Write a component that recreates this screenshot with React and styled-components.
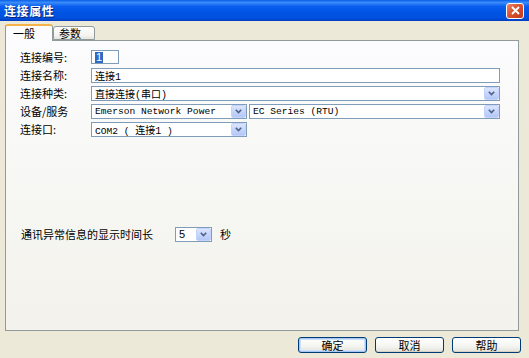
import React from 'react';
import styled, { createGlobalStyle } from 'styled-components';

const GlobalStyle = createGlobalStyle`
  html, body {
    margin: 0;
    padding: 0;
    background: #ece9d8;
    overflow: hidden;
  }
  body {
    font-family: "Noto Sans CJK SC", "Liberation Sans", sans-serif;
    font-size: 11px;
    color: #000;
  }
`;

const Window = styled.div`
  width: 529px;
  height: 358px;
  display: flex;
  flex-direction: column;
  background: #ece9d8;
`;

const TitleBar = styled.div`
  height: 21px;
  flex: none;
  display: flex;
  align-items: center;
  justify-content: space-between;
  padding: 0 5px 0 4px;
  background: linear-gradient(180deg, #0a5fe8 0%, #3b8cf8 12%, #0a5ef0 30%, #0054e3 60%, #0150de 85%, #003dc0 100%);
`;

const Title = styled.span`
  color: #fff;
  font-weight: bold;
  font-size: 12px;
  letter-spacing: 0.6px;
  text-shadow: 1px 1px 0 #0a1f76;
`;

const CloseButton = styled.div`
  width: 18px;
  height: 16px;
  border: 1px solid #fff;
  border-radius: 3px;
  background: linear-gradient(135deg, #e8846a 0%, #d9542f 45%, #c1391a 100%);
  display: flex;
  align-items: center;
  justify-content: center;
  box-sizing: border-box;
`;

const Body = styled.div`
  flex: 1;
  display: flex;
  flex-direction: column;
  padding: 3px 10px 0 5px;
`;

const TabRow = styled.div`
  display: flex;
  align-items: flex-end;
  height: 16px;
  position: relative;
  z-index: 1;
`;

const Tab = styled.div`
  box-sizing: border-box;
  height: ${(p) => (p.$active ? '17px' : '14px')};
  width: ${(p) => (p.$active ? '48px' : '42px')};
  margin-bottom: ${(p) => (p.$active ? '-1px' : '0')};
  border: 1px solid #919b9c;
  border-bottom: ${(p) => (p.$active ? 'none' : '1px solid #919b9c')};
  border-top: ${(p) => (p.$active ? '2px solid #f5b24a' : '1px solid #919b9c')};
  border-radius: 3px 3px 0 0;
  background: ${(p) => (p.$active ? '#fcfcfe' : 'linear-gradient(180deg, #fff 0%, #f3f3ef 70%, #e6e5dd 100%)')};
  padding-left: ${(p) => (p.$active ? '7px' : '5px')};
  line-height: ${(p) => (p.$active ? '14px' : '12px')};
  font-size: 11px;
`;

const Panel = styled.div`
  box-sizing: border-box;
  height: 291px;
  border: 1px solid #919b9c;
  background: linear-gradient(180deg, #fcfcfe 0%, #f6f6f2 60%, #f3f2ec 100%);
  padding: 9px 18px 0 14px;
  display: flex;
  flex-direction: column;
`;

const Form = styled.div`
  display: grid;
  grid-template-columns: 71px 1fr;
  grid-auto-rows: 16px;
  row-gap: 2px;
`;

const Label = styled.div`
  line-height: 15px;
  font-size: 11px;
  white-space: nowrap;
`;

const Fields = styled.div`
  display: flex;
  gap: 2px;
`;

const Box = styled.div`
  box-sizing: border-box;
  height: ${(p) => p.$h || 15}px;
  width: ${(p) => (p.$w ? `${p.$w}px` : 'auto')};
  flex: ${(p) => (p.$w ? 'none' : '1')};
  border: 1px solid #7f9db9;
  background: #fff;
  display: flex;
  align-items: center;
  padding-left: 3px;
  font-family: "Liberation Mono", "Noto Sans CJK SC", monospace;
  font-size: 10px;
  white-space: nowrap;
  overflow: hidden;
`;

const Mono = styled.span`
  font-family: "Liberation Mono", monospace;
  font-size: 9.6px;
  letter-spacing: 0;
`;

const Selected = styled.span`
  background: #316ac5;
  color: #fff;
  padding: 0 1px;
  line-height: 11px;
  font-family: "Liberation Sans", sans-serif;
  font-size: 11px;
`;

const Value = styled.span`
  flex: 1;
  overflow: hidden;
`;

const ArrowBtn = styled.div`
  flex: none;
  width: 15px;
  height: 13px;
  box-sizing: border-box;
  border: 1px solid #c3d3fd;
  border-radius: 2px;
  background: linear-gradient(180deg, #dce6fd 0%, #c5d5fc 50%, #b4c8f6 100%);
  display: flex;
  align-items: center;
  justify-content: center;
`;

const Chevron = () => (
  <svg width="7" height="5" viewBox="0 0 7 5">
    <path d="M0.8 0.8 L3.5 3.6 L6.2 0.8" fill="none" stroke="#4d6185" strokeWidth="1.6" />
  </svg>
);

const Combo = ({ w, children, sans }) => (
  <Box $w={w}>
    <Value style={sans ? { fontFamily: '"Liberation Sans", sans-serif', fontSize: 11 } : undefined}>{children}</Value>
    <ArrowBtn>
      <Chevron />
    </ArrowBtn>
  </Box>
);

const TimeoutRow = styled.div`
  margin-top: 88px;
  display: flex;
  align-items: center;
  height: 16px;
  padding-left: 1px;
`;

const TimeoutLabel = styled.span`
  width: 154px;
  font-size: 11px;
  white-space: nowrap;
`;

const Unit = styled.span`
  margin-left: 8px;
  font-size: 11px;
`;

const ButtonRow = styled.div`
  display: flex;
  justify-content: flex-end;
  gap: 8px;
  margin-top: 6px;
  margin-right: -2px;
`;

const Button = styled.div`
  box-sizing: border-box;
  width: 69px;
  height: 16px;
  border: 1px solid #003c74;
  border-radius: 3px;
  background: linear-gradient(180deg, #ffffff 0%, #f4f4f0 60%, #e3e2da 100%);
  box-shadow: ${(p) => (p.$default ? 'inset 0 0 0 1px #a7c6f4, inset 0 0 0 2px #cfe0fb' : 'inset 0 -1px 0 #d6d0c5')};
  display: flex;
  align-items: center;
  justify-content: center;
  font-size: 11px;
  line-height: 1;
`;

export default function App() {
  return (
    <>
      <GlobalStyle />
      <Window>
        <TitleBar>
          <Title>连接属性</Title>
          <CloseButton>
            <svg width="9" height="9" viewBox="0 0 9 9">
              <path d="M1 1 L8 8 M8 1 L1 8" stroke="#fff" strokeWidth="1.8" />
            </svg>
          </CloseButton>
        </TitleBar>
        <Body>
          <TabRow>
            <Tab $active>一般</Tab>
            <Tab>参数</Tab>
          </TabRow>
          <Panel>
            <Form>
              <Label>连接编号:</Label>
              <Fields>
                <Box $w={28} $h={14}>
                  <Selected>1</Selected>
                </Box>
              </Fields>
              <Label>连接名称:</Label>
              <Fields>
                <Box>连接1</Box>
              </Fields>
              <Label>连接种类:</Label>
              <Fields>
                <Combo>直接连接(串口)</Combo>
              </Fields>
              <Label>设备/服务</Label>
              <Fields>
                <Combo w={156}>
                  <Mono>Emerson Network Power</Mono>
                </Combo>
                <Combo>
                  <Mono>EC Series (RTU)</Mono>
                </Combo>
              </Fields>
              <Label>连接口:</Label>
              <Fields>
                <Combo w={156}>
                  <Mono>COM2 ( </Mono>连接1<Mono> )</Mono>
                </Combo>
              </Fields>
            </Form>
            <TimeoutRow>
              <TimeoutLabel>通讯异常信息的显示时间长</TimeoutLabel>
              <Combo w={37} sans>5</Combo>
              <Unit>秒</Unit>
            </TimeoutRow>
          </Panel>
          <ButtonRow>
            <Button $default>确定</Button>
            <Button>取消</Button>
            <Button>帮助</Button>
          </ButtonRow>
        </Body>
      </Window>
    </>
  );
}
